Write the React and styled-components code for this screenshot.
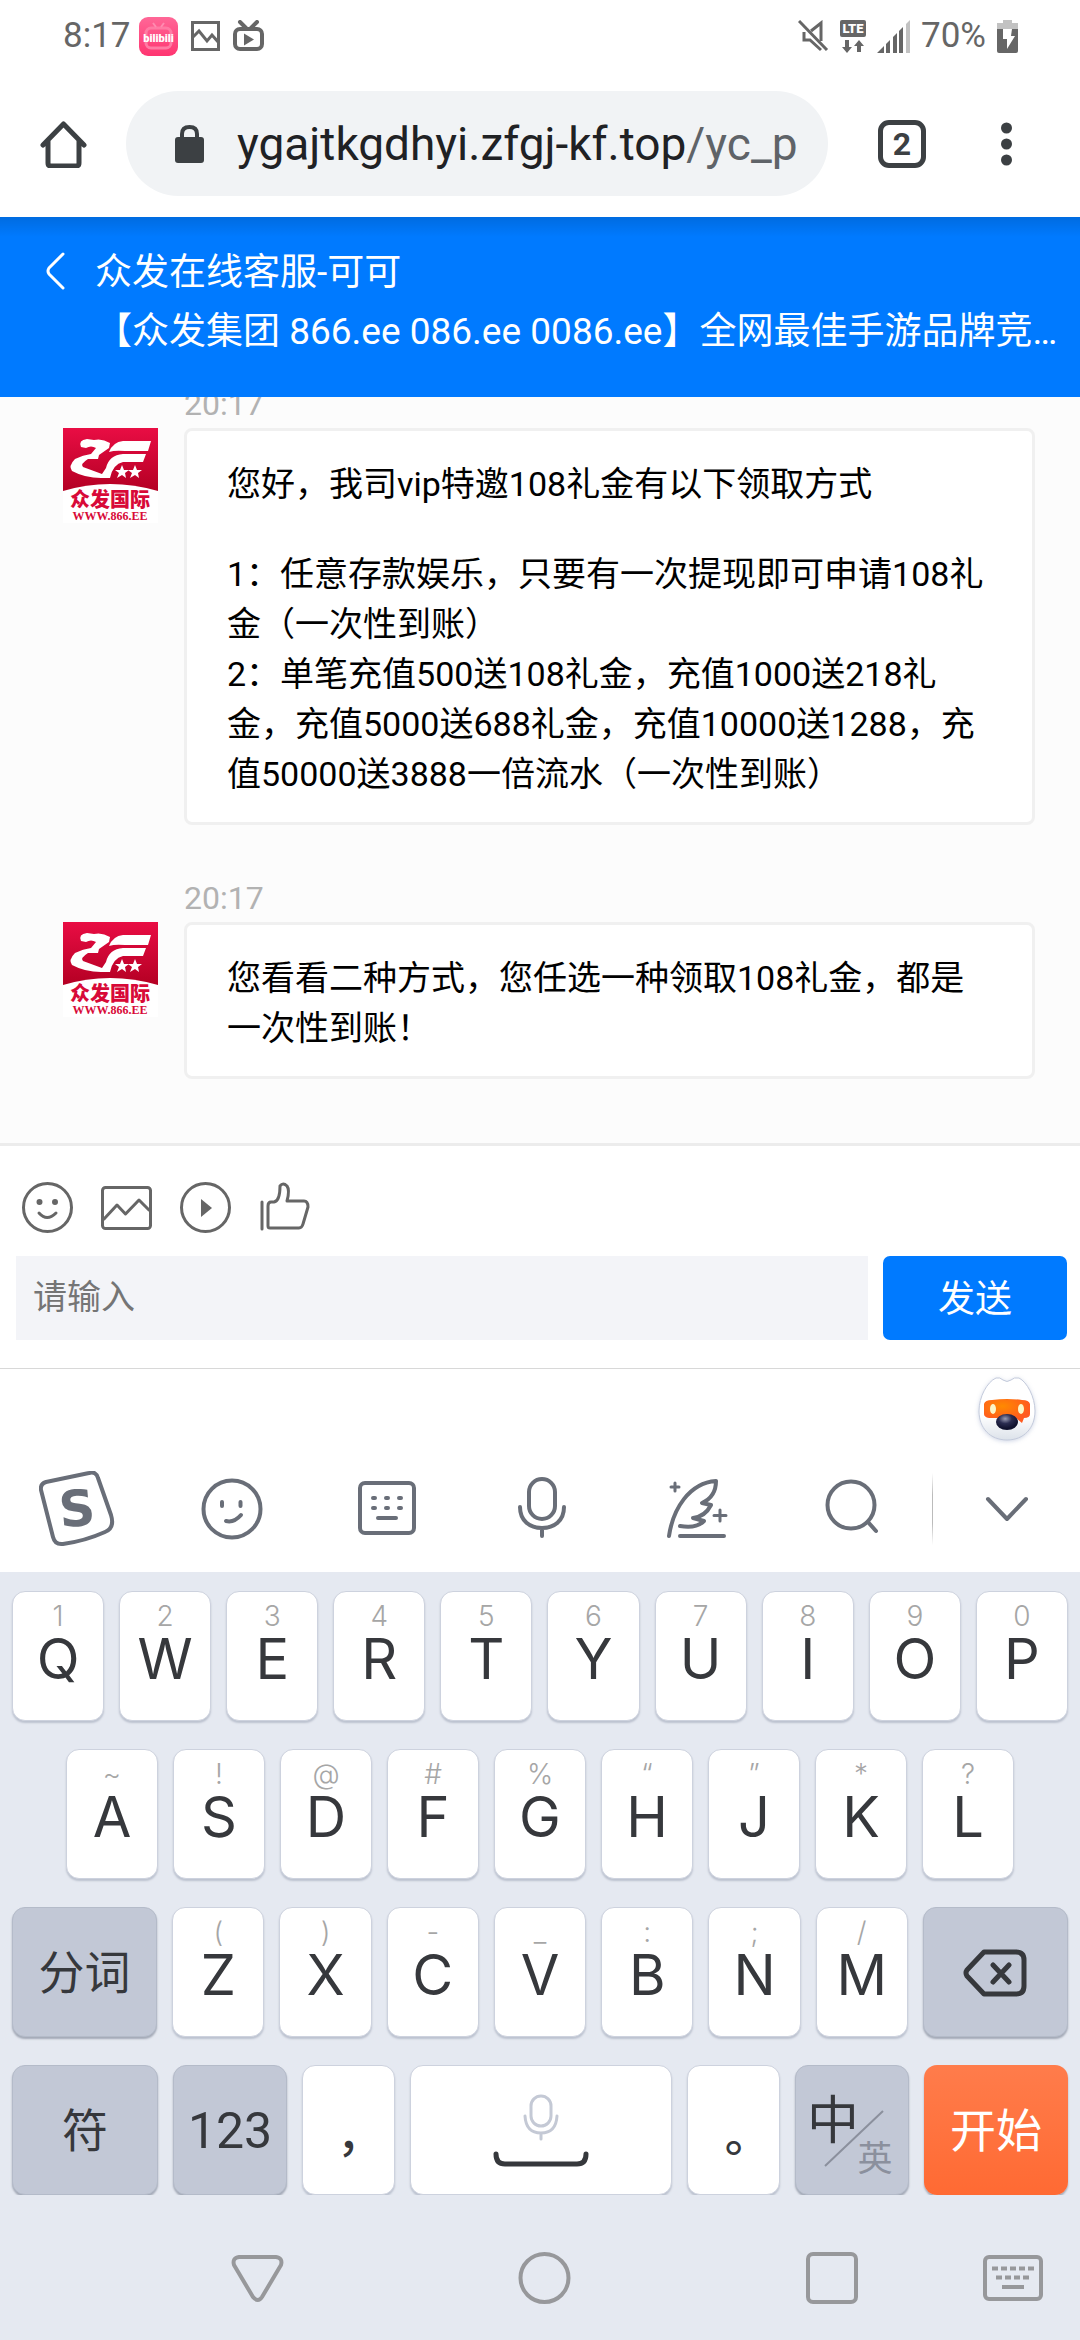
import React from "react";
import styled, { createGlobalStyle, css } from "styled-components";

const GlobalStyle = createGlobalStyle`
  * { box-sizing: border-box; }
  body {
    margin: 0;
    background: #fff;
    font-family: Roboto, "Noto Sans CJK SC", sans-serif;
  }
  button {
    border: 0;
    padding: 0;
    background: none;
    font-family: inherit;
    color: inherit;
  }
  svg { display: block; flex: none; }
`;

const Page = styled.div`
  display: flex;
  flex-direction: column;
  height: 100vh;
`;

/* ---------- status bar ---------- */

const StatusBar = styled.div`
  display: flex;
  align-items: center;
  justify-content: space-between;
  flex: none;
  height: 70px;
  padding: 2px 62px 0 63px;
  font-size: 35px;
  line-height: 40px;
  color: #666;
`;

const StatusGroup = styled.div`
  display: flex;
  align-items: center;
  gap: ${({ gap }) => gap}px;
`;

/* ---------- browser toolbar ---------- */

const BrowserBar = styled.div`
  display: flex;
  align-items: center;
  flex: none;
  height: 147px;
  padding: 0 68px 0 40px;
`;

const IconButton = styled.button`
  display: flex;
  align-items: center;
  justify-content: center;
  flex: none;
`;

const AddressBar = styled.button`
  display: flex;
  align-items: center;
  flex: 1;
  min-width: 0;
  height: 105px;
  margin: 0 50px 0 39px;
  padding: 0 30px 0 49px;
  gap: 33px;
  border-radius: 53px;
  background: #f1f3f5;
  font-size: 46px;
  color: #202124;
  white-space: nowrap;
`;

const UrlPath = styled.span`
  color: #5f6368;
`;

const TabCount = styled.button`
  flex: none;
  width: 48px;
  height: 48px;
  margin-right: 75px;
  border: 5px solid #3c4043;
  border-radius: 11px;
  font-size: 32px;
  font-weight: 700;
  line-height: 36px;
  color: #3c4043;
`;

/* ---------- chat ---------- */

const ChatHeader = styled.header`
  display: flex;
  flex: none;
  height: 180px;
  padding: 26px 0 0 46px;
  gap: 30px;
  background: linear-gradient(rgba(0, 0, 0, 0.12), transparent 20px) #007aff;
  color: #fff;
`;

const BackButton = styled(IconButton)`
  width: 19px;
  height: 56px;
`;

const HeaderText = styled.div`
  min-width: 0;
  font-size: 37px;
  line-height: 59px;
  white-space: nowrap;
`;

const Title = styled.h1`
  margin: 0;
  font-size: inherit;
  font-weight: 400;
`;

const Messages = styled.main`
  display: flex;
  flex-direction: column;
  justify-content: flex-end;
  flex: 1;
  gap: 55px;
  min-height: 0;
  padding: 0 45px 64px 63px;
  overflow: hidden;
  background: #fcfcfc;
`;

const Message = styled.article`
  display: grid;
  grid-template-columns: 95px 1fr;
  column-gap: 26px;
  row-gap: 6px;
`;

const Time = styled.time`
  grid-column: 2;
  font-size: 32px;
  line-height: 36px;
  color: #b2b2b2;
`;

const Bubble = styled.div`
  padding: 28px 40px 23px;
  border: 3px solid #f0f0f0;
  border-radius: 8px;
  background: #fff;
  font-size: 34px;
  line-height: 50px;
  color: #000;
`;

const Paragraph = styled.p`
  margin: ${({ spaced }) => (spaced ? 40 : 0)}px 0 0;
`;

const Composer = styled.form`
  flex: none;
  padding: 36px 13px 28px 16px;
  border-top: 3px solid #ececec;
  border-bottom: 1px solid #d8d8d8;
`;

const ComposerTools = styled.div`
  display: flex;
  gap: 28px;
  padding-left: 6px;
  margin-bottom: 23px;
`;

const ComposerRow = styled.div`
  display: flex;
  gap: 15px;
`;

const TextBox = styled.input`
  flex: 1;
  min-width: 0;
  height: 84px;
  padding: 0 17px 2px;
  border: 0;
  border-radius: 0;
  background: #f3f4f8;
  font-family: inherit;
  font-size: 34px;
  &::placeholder { color: #757575; }
`;

const SendButton = styled.button`
  width: 184px;
  height: 84px;
  padding-bottom: 4px;
  border-radius: 7px;
  background: #007aff;
  font-size: 37px;
  color: #fff;
`;

/* ---------- keyboard ---------- */

const MascotRow = styled.div`
  display: flex;
  justify-content: flex-end;
  flex: none;
  height: 72px;
  padding: 2px 39px 0;
`;

const KeyboardTools = styled.div`
  display: flex;
  align-items: center;
  justify-content: space-between;
  flex: none;
  height: 131px;
  padding: 5px 35px 0 39px;
`;

const HideKeyboard = styled(IconButton)`
  position: relative;
  &::before {
    content: "";
    position: absolute;
    left: -37px;
    top: 2px;
    width: 1px;
    height: 72px;
    background: linear-gradient(transparent, #bbb 30%, #bbb 70%, transparent);
  }
`;

const Keyboard = styled.div`
  display: flex;
  flex-direction: column;
  flex: none;
  gap: 28px;
  padding: 19px 12px 0;
  background: #e5e9f1;
`;

const KeyRow = styled.div`
  display: flex;
  gap: 15px;
  padding: 0 ${({ inset }) => inset || 0}px;
`;

const keyTones = {
  light: css`
    background: #fff;
    border: 1px solid #cdd2de;
    box-shadow: 0 2px 2px #bcc2cf;
  `,
  dark: css`
    background: #c2c8d6;
    border: 1px solid #b4bbc9;
    box-shadow: 0 2px 2px #a3a9b6;
  `,
  accent: css`
    background: linear-gradient(#ff7c4b, #ff6a33);
    box-shadow: 0 2px 2px #a3a9b6;
    color: #fff;
  `,
};

const Key = styled.button`
  display: flex;
  flex-direction: column;
  align-items: center;
  justify-content: ${({ stacked }) => (stacked ? "flex-start" : "center")};
  flex: ${({ grow }) => grow || 92} 1 0;
  min-width: 0;
  height: 130px;
  padding-top: ${({ stacked }) => (stacked ? 7 : 2)}px;
  border-radius: 13px;
  font-size: 46px;
  line-height: 56px;
  color: #36383c;
  ${({ tone }) => keyTones[tone || "light"]}
`;

const Hint = styled.span`
  font-family: Inter, sans-serif;
  font-size: 28px;
  font-weight: 300;
  line-height: 34px;
  color: #a6a6a6;
`;

const Letter = styled.span`
  font-family: Inter, sans-serif;
  font-size: 56px;
  line-height: 52px;
`;

const NumberLabel = styled.span`
  font-size: 50px;
`;

const Punctuation = styled.span`
  padding-top: 28px;
  font-family: "Noto Sans CJK TC", sans-serif;
  font-size: 46px;
  font-weight: 500;
`;

const SystemNav = styled.nav`
  display: flex;
  align-items: center;
  justify-content: space-between;
  flex: none;
  height: 145px;
  padding: 21px 37px 0 231px;
  background: #e5e9f1;
`;

const NavButtons = styled.div`
  display: flex;
  gap: 234px;
`;

const Line = ({ size = 76, w = size, h = size, color = "#696e78", width = 4, children }) => (
  <svg width={w} height={h} viewBox={`0 0 ${w} ${h}`} fill="none" stroke={color}
    strokeWidth={width} strokeLinecap="round" strokeLinejoin="round" aria-hidden="true">
    {children}
  </svg>
);

const BilibiliIcon = () => (
  <svg width="39" height="39" viewBox="0 0 39 39">
    <defs>
      <linearGradient id="bili" x1="0" y1="0" x2="0" y2="1">
        <stop offset="0" stopColor="#ff6797" />
        <stop offset="1" stopColor="#ff3571" />
      </linearGradient>
    </defs>
    <rect width="39" height="39" rx="9" fill="url(#bili)" />
    <rect x="7" y="11" width="25" height="20" rx="5" fill="none" stroke="#ff7ba4" strokeWidth="3" />
    <path d="M14 6l3 4M25 6l-3 4" stroke="#ff8bb0" strokeWidth="2" />
    <text x="19.5" y="25" textAnchor="middle" fontFamily="Roboto" fontSize="11" fontWeight="900" fill="#fff">bilibili</text>
  </svg>
);

const GalleryIcon = () => (
  <svg width="29" height="30" viewBox="0 0 29 30" fill="none" stroke="#666" strokeWidth="3">
    <path d="M1.5 1.5h26v27h-26zM2 16l6-6 8 10 5-6 7 8" />
  </svg>
);

const TvIcon = () => (
  <svg width="31" height="32" viewBox="0 0 31 32" fill="none" stroke="#666" strokeWidth="4" strokeLinecap="round">
    <path d="M7 2l6 6M24 2l-6 6" />
    <rect x="2" y="9" width="27" height="20" rx="5" />
    <path d="M11 13.500l10 6-10 6z" fill="#666" stroke="none" />
  </svg>
);

const MuteIcon = () => (
  <svg width="31" height="32" viewBox="0 0 31 32" fill="none" stroke="#666" strokeWidth="3">
    <path d="M1 1l28 29" />
    <path d="M13 11L23 3v18M6 12v8h6l11 10" />
  </svg>
);

const LteIcon = () => (
  <svg width="26" height="33" viewBox="0 0 26 33">
    <rect width="26" height="17" rx="2" fill="#666" />
    <text x="13" y="13" textAnchor="middle" fontFamily="Roboto" fontSize="13" fontWeight="900" fill="#fff">LTE</text>
    <path d="M5 20h4v7h3l-5 6-5-6h3zM17 32h4v-6h3l-5-6-5 6h3z" fill="#666" />
  </svg>
);

const SignalIcon = () => (
  <svg width="33" height="33" viewBox="0 0 33 33" fill="#666">
    <path d="M0 33l7-7v7zM9 24l4-4v13H9zM16 17l4-4v20h-4zM22 11l4-4v26h-4z" />
    <path d="M29 4l4-4v33h-4z" fill="#c2c2c2" />
  </svg>
);

const BatteryIcon = () => (
  <svg width="21" height="33" viewBox="0 0 21 33">
    <path d="M6 0h9v3h6v6H0V3h6z" fill="#c2c2c2" />
    <path d="M0 9h21v22q0 2-2 2H2q-2 0-2-2z" fill="#666" />
    <path d="M6 9h9l-1 7h4l-8 13v-10H6z" fill="#fff" />
  </svg>
);

const Avatar = () => (
  <svg width="95" height="95" viewBox="0 0 95 95" role="img" aria-label="众发国际">
    <defs>
      <linearGradient id="red" x1="0" y1="0" x2="0" y2="1">
        <stop offset="0" stopColor="#e90d44" />
        <stop offset="0.65" stopColor="#b50024" />
      </linearGradient>
    </defs>
    <rect width="95" height="95" fill="url(#red)" />
    <path d="M0 63Q47 49 95 63V95H0z" fill="#fff" />
    <g fill="#fff">
      <path d="M18 19Q15 12 24 11L31 12Q39 10 47 15L46 20L36 27L35 31L25 31Q17 36 20 39L39 46L43 40Q46 27 60 26H83L80 34H60Q50 36 47 50H38Q22 50 9 43Q5 38 12 31Q20 27 28 26L33 20Q28 17 23 20Z" />
      <path d="M46 24Q50 14 60 13H88L85 23H62Q52 22 46 24Z" />
      <path d="M59 37l2 5h5l-4 3 1 5-4-3-5 3 2-5-4-3h5zM72 37l2 5h5l-4 3 1 5-4-3-5 3 2-5-4-3h5z" />
    </g>
    <text x="47" y="79" textAnchor="middle" fontFamily="Noto Sans CJK SC" fontSize="20" fontWeight="900" fill="#d80a38">众发国际</text>
    <text x="47" y="92" textAnchor="middle" fontFamily="Liberation Serif" fontSize="12" fontWeight="700" fill="#d80a38">WWW.866.EE</text>
  </svg>
);

const Mascot = () => (
  <svg width="68" height="76" viewBox="-5 -6 68 76">
    <defs>
      <linearGradient id="face" x1="0" y1="0" x2="0" y2="1">
        <stop offset="0.6" stopColor="#fff" />
        <stop offset="1" stopColor="#dce2ea" />
      </linearGradient>
      <radialGradient id="visor" cx="0.4" cy="0.3" r="0.6">
        <stop offset="0" stopColor="#ff8a00" />
        <stop offset="1" stopColor="#ff5a1f" />
      </radialGradient>
      <radialGradient id="nose" cx="0.42" cy="0.3" r="0.6">
        <stop offset="0" stopColor="#9a9cb4" />
        <stop offset="0.5" stopColor="#2a2c50" />
        <stop offset="1" stopColor="#10122e" />
      </radialGradient>
      <filter id="glow" x="-20%" y="-20%" width="140%" height="140%">
        <feDropShadow dx="0" dy="1" stdDeviation="2" floodColor="#8b9ac0" floodOpacity="0.4" />
      </filter>
    </defs>
    <path d="M18 1Q22 0 25 3Q29 6 33 3Q36 0 41 1C49 5 57 20 57 34C57 51 46 63 29 63S1 51 1 34C1 20 9 5 18 1Z"
      fill="url(#face)" stroke="#c3cadb" filter="url(#glow)" />
    <path d="M6 27Q7 23 14 23Q29 21 44 23Q51 23 52 27V37Q52 41 46 41L44 46L38 41H11Q6 40 6 37Z" fill="url(#visor)" />
    <ellipse cx="15" cy="32" rx="3" ry="5" fill="#fbf6c8" />
    <ellipse cx="43" cy="32" rx="3" ry="5" fill="#fbf6c8" />
    <ellipse cx="29" cy="45" rx="11" ry="8" fill="url(#nose)" />
  </svg>
);

const composerIcons = [
  {
    label: "表情",
    art: <><circle cx="25.500" cy="25.500" r="24" /><circle cx="17.500" cy="20" r="1.500" /><circle cx="33" cy="20" r="1.500" /><path d="M17 31Q25 40 34 31" /></>,
  },
  {
    label: "图片",
    art: <><rect x="1.500" y="5.500" width="48" height="41" rx="3" /><path d="M3 37L16 23l8.500 9L38 18l10 10" /></>,
  },
  {
    label: "视频",
    art: <><circle cx="25.500" cy="25.500" r="24" /><path d="M21 17v18l11-9z" fill="#666" stroke="none" /></>,
  },
  {
    label: "点赞",
    art: <path d="M3 20v27M9 24v20q0 2 2 2h29q3 0 4-4l5-17q0-6-4-6H28Q31 8 28 4Q24 0 21 4Q21 19 15 20H12Q9 20 9 24Z" />,
  },
];

const keyboardIcons = [
  {
    label: "搜狗",
    art: (
      <>
        <path d="M2 19Q1 13 7 11L50 2Q57 0 59 7L72 44Q76 57 66 61Q46 70 24 73Q16 74 14 66Z" />
        <text x="38" y="55" textAnchor="middle" fontFamily="DejaVu Sans" fontSize="50" fontWeight="700" fill="#696e78" stroke="none" transform="rotate(-5 38 37)">S</text>
      </>
    ),
  },
  {
    label: "表情",
    art: <><circle cx="38" cy="38" r="28.500" /><path d="M28 31v4M46.500 31v4M32 50Q40 52 47 44" /></>,
  },
  {
    label: "键盘",
    art: <><rect x="11" y="12" width="54" height="50" rx="5" /><path d="M24 27h2M37 27h2M50 27h2M24 37h2M37 37h2M50 37h2M29 47h18" /></>,
  },
  {
    label: "语音",
    art: <><rect x="25" y="8" width="26" height="40" rx="13" /><path d="M16 36C16 50 26 57 38 57S60 50 60 36M38 57v8" /></>,
  },
  {
    label: "写作",
    art: (
      <>
        <path d="M10 65C14 38 30 12 57 10C57 20 52 28 43 32L52 34C48 42 42 46 34 47L45 50C40 55 32 57 21 55M21 65H65" />
        <path d="M16 12v8M12 16h8M61 39v11M55 44.500h12" strokeWidth="3" />
      </>
    ),
  },
  {
    label: "搜索",
    art: <><circle cx="37" cy="34" r="23.500" /><path d="M54 51l8 9" /></>,
  },
];

const letterRows = [
  { keys: [["1", "Q"], ["2", "W"], ["3", "E"], ["4", "R"], ["5", "T"], ["6", "Y"], ["7", "U"], ["8", "I"], ["9", "O"], ["0", "P"]] },
  { inset: 54, keys: [["~", "A"], ["!", "S"], ["@", "D"], ["#", "F"], ["%", "G"], ["“", "H"], ["”", "J"], ["*", "K"], ["?", "L"]] },
];
const lastLetters = [["(", "Z"], [")", "X"], ["-", "C"], ["_", "V"], [":", "B"], [";", "N"], ["/", "M"]];

const LetterKey = ({ hint, letter }) => (
  <Key type="button" stacked={1}>
    <Hint>{hint}</Hint>
    <Letter>{letter}</Letter>
  </Key>
);

const LangArt = () => (
  <svg width="88" height="110" viewBox="0 0 88 110">
    <text x="25" y="63" textAnchor="middle" fontFamily="Noto Sans CJK SC" fontSize="52" fill="#36383c">中</text>
    <path d="M17 90L75 35" stroke="#8b909d" strokeWidth="2" />
    <text x="67" y="95" textAnchor="middle" fontFamily="Noto Sans CJK SC" fontSize="35" fill="#8b909d">英</text>
  </svg>
);

const navColor = "#97989b";

export default function App() {
  return (
    <Page>
      <GlobalStyle />

      <StatusBar>
        <StatusGroup gap={8}>
          <span>8:17</span>
          <StatusGroup gap={13}>
            <BilibiliIcon />
            <GalleryIcon />
            <TvIcon />
          </StatusGroup>
        </StatusGroup>
        <StatusGroup gap={11}>
          <MuteIcon />
          <LteIcon />
          <SignalIcon />
          <span>70%</span>
          <BatteryIcon />
        </StatusGroup>
      </StatusBar>

      <BrowserBar>
        <IconButton type="button" aria-label="主页">
          <Line w={47} h={48} color="#3c4043" width={5}>
            <path d="M3 25L23.500 4 44 25M8 21v22q0 3 3 3h25q3 0 3-3V21" />
          </Line>
        </IconButton>
        <AddressBar type="button">
          <svg width="29" height="38" viewBox="0 0 29 38">
            <rect y="12" width="29" height="26" rx="3" fill="#3c4043" />
            <path d="M7 14V9q0-7 7.500-7T22 9v5" fill="none" stroke="#3c4043" strokeWidth="4" />
          </svg>
          <span>ygajtkgdhyi.zfgj-kf.top<UrlPath>/yc_p</UrlPath></span>
        </AddressBar>
        <TabCount type="button">2</TabCount>
        <IconButton type="button" aria-label="更多">
          <svg width="11" height="44" viewBox="0 0 11 44" fill="#3c4043">
            <circle cx="5.500" cy="6" r="5.500" />
            <circle cx="5.500" cy="22" r="5.500" />
            <circle cx="5.500" cy="38" r="5.500" />
          </svg>
        </IconButton>
      </BrowserBar>

      <ChatHeader>
        <BackButton type="button" aria-label="返回">
          <Line w={19} h={38} color="#fff" width={3}>
            <path d="M17 2L3 16q-2 3 0 6l14 14" />
          </Line>
        </BackButton>
        <HeaderText>
          <Title>众发在线客服-可可</Title>
          <div>【众发集团 866.ee 086.ee 0086.ee】全网最佳手游品牌竞…</div>
        </HeaderText>
      </ChatHeader>

      <Messages>
        <Message>
          <Time>20:17</Time>
          <Avatar />
          <Bubble>
            <Paragraph>您好，我司vip特邀108礼金有以下领取方式</Paragraph>
            <Paragraph spaced={1}>1：任意存款娱乐，只要有一次提现即可申请108礼金（一次性到账）</Paragraph>
            <Paragraph>2：单笔充值500送108礼金，充值1000送218礼金，充值5000送688礼金，充值10000送1288，充值50000送3888一倍流水（一次性到账）</Paragraph>
          </Bubble>
        </Message>
        <Message>
          <Time>20:17</Time>
          <Avatar />
          <Bubble>
            <Paragraph>您看看二种方式，您任选一种领取108礼金，都是一次性到账！</Paragraph>
          </Bubble>
        </Message>
      </Messages>

      <Composer onSubmit={(e) => e.preventDefault()}>
        <ComposerTools>
          {composerIcons.map(({ label, art }) => (
            <IconButton key={label} type="button" aria-label={label}>
              <Line size={51} color="#666" width={3}>{art}</Line>
            </IconButton>
          ))}
        </ComposerTools>
        <ComposerRow>
          <TextBox type="text" placeholder="请输入" aria-label="请输入" />
          <SendButton type="submit">发送</SendButton>
        </ComposerRow>
      </Composer>

      <MascotRow>
        <Mascot />
      </MascotRow>
      <KeyboardTools>
        {keyboardIcons.map(({ label, art }) => (
          <IconButton key={label} type="button" aria-label={label}>
            <Line>{art}</Line>
          </IconButton>
        ))}
        <HideKeyboard type="button" aria-label="收起">
          <Line><path d="M19 28l19 20 19-20" /></Line>
        </HideKeyboard>
      </KeyboardTools>

      <Keyboard>
        {letterRows.map(({ inset, keys }) => (
          <KeyRow key={keys[0][1]} inset={inset}>
            {keys.map(([hint, letter]) => (
              <LetterKey key={letter} hint={hint} letter={letter} />
            ))}
          </KeyRow>
        ))}
        <KeyRow>
          <Key type="button" tone="dark" grow={146}>分词</Key>
          {lastLetters.map(([hint, letter]) => (
            <LetterKey key={letter} hint={hint} letter={letter} />
          ))}
          <Key type="button" tone="dark" grow={146} aria-label="删除">
            <Line w={64} h={48} color="#36383c" width={5}>
              <path d="M21 3h32q8 0 8 8v26q0 8-8 8H21L4 27q-2-3 0-6zM30 16l16 17M46 16L30 33" />
            </Line>
          </Key>
        </KeyRow>
        <KeyRow>
          <Key type="button" tone="dark" grow={146}>符</Key>
          <Key type="button" tone="dark" grow={114}><NumberLabel>123</NumberLabel></Key>
          <Key type="button"><Punctuation>，</Punctuation></Key>
          <Key type="button" grow={264} aria-label="空格">
            <Line w={96} h={76} color="#c4c9d5" width={3}>
              <rect x="38" y="3" width="20" height="30" rx="10" />
              <path d="M32 23q1 17 16 17t16-17M48 40v6" />
              <path d="M3 61q0 10 9 10h72q9 0 9-10" stroke="#36383c" strokeWidth="5" />
            </Line>
          </Key>
          <Key type="button"><Punctuation>。</Punctuation></Key>
          <Key type="button" tone="dark" grow={114} aria-label="中英切换"><LangArt /></Key>
          <Key type="button" tone="accent" grow={146}>开始</Key>
        </KeyRow>
      </Keyboard>

      <SystemNav>
        <NavButtons>
          <IconButton type="button" aria-label="返回">
            <Line w={53} h={52} color={navColor}>
              <path d="M8 5h37q7 1 5 8L31 45q-4 6-9 0L3 13q-2-7 5-8z" />
            </Line>
          </IconButton>
          <IconButton type="button" aria-label="主屏幕">
            <Line w={53} h={52} color={navColor}><circle cx="26.500" cy="26" r="24" /></Line>
          </IconButton>
          <IconButton type="button" aria-label="最近任务">
            <Line w={53} h={52} color={navColor}><rect x="3" y="2" width="48" height="48" rx="5" /></Line>
          </IconButton>
        </NavButtons>
        <IconButton type="button" aria-label="切换输入法">
          <Line w={60} h={46} color={navColor}>
            <rect x="2" y="2" width="56" height="42" rx="4" />
            <path d="M9 13.500h44" strokeLinecap="butt" strokeDasharray="6 3" />
            <path d="M13 22.500h33" strokeLinecap="butt" strokeDasharray="6 3" />
            <path d="M19 32h22" strokeLinecap="butt" />
          </Line>
        </IconButton>
      </SystemNav>
    </Page>
  );
}
